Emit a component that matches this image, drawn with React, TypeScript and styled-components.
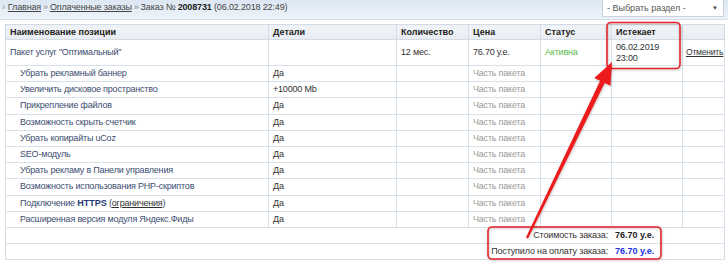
import { FC } from "react";
import styled, { createGlobalStyle } from "styled-components";

const GlobalStyle = createGlobalStyle`
  html, body {
    margin: 0;
    padding: 0;
    background: #ffffff;
  }
  body {
    font-family: Tahoma, "Liberation Sans", Arial, sans-serif;
    font-size: 9px;
    color: #333;
  }
`;

const Page = styled.div`
  position: relative;
  width: 728px;
  height: 264px;
  overflow: hidden;
`;

const TopBar = styled.div`
  height: 19px;
  display: flex;
  align-items: flex-start;
  justify-content: space-between;
  padding: 0 4px 0 2px;
  background: linear-gradient(#dce7f3, #edf3f9);
  border-bottom: 1px solid #d2deec;
`;

const Crumbs = styled.div`
  padding-top: 1px;
  line-height: 12px;
  color: #444;
  white-space: nowrap;
  letter-spacing: -0.15px;

  a {
    color: #444;
    text-decoration: underline;
  }
  b {
    color: #222;
  }
`;

const Sep = styled.span<{ $first?: boolean }>`
  color: #888;
  margin: ${(p) => (p.$first ? "0 3px 0 0" : "0 2px")};
`;

const Select = styled.div`
  width: 122px;
  height: 17px;
  box-sizing: border-box;
  background: #fff;
  border: 1px solid #c9d3de;
  border-top: none;
  display: flex;
  align-items: center;
  justify-content: space-between;
  padding: 0 5px 0 4px;
  color: #555;
`;

const Caret = styled.span`
  font-size: 6px;
  color: #444;
`;

const Table = styled.table`
  margin: 4px 0 0 5px;
  width: 719px;
  table-layout: fixed;
  border-collapse: collapse;
  border: 1px solid #d3dbe6;
`;

const Th = styled.th`
  height: 14px;
  padding: 0 4px;
  text-align: left;
  font-weight: bold;
  color: #222;
  background: linear-gradient(#f1f3f6, #e9edf2);
  border: 1px solid #d3dbe6;
  white-space: nowrap;
`;

type Tone = "name" | "sub" | "muted" | "green" | "plain";

const toneColor: Record<Tone, string> = {
  name: "#3c4d70",
  sub: "#3c4d70",
  muted: "#9a9a9a",
  green: "#5cbb4a",
  plain: "#333",
};

const Td = styled.td<{ $tall?: boolean; $tone?: Tone }>`
  height: ${(p) => (p.$tall ? "25px" : "15.2px")};
  padding: ${(p) => (p.$tone === "sub" ? "0 4px 0 14px" : "0 4px")};
  border: 1px solid #d8e0ea;
  line-height: 11px;
  letter-spacing: -0.2px;
  white-space: nowrap;
  overflow: hidden;
  color: ${(p) => toneColor[p.$tone ?? "plain"]};

  a {
    color: #333;
    text-decoration: underline;
  }
`;

const CancelCell = styled(Td)`
  padding: 0 2px 0 3px;
  font-size: 8.5px;
`;

const Https = styled.b`
  color: #1f3b78;
  letter-spacing: 0;
`;

const SumCell = styled.td`
  height: 15px;
  padding: 0;
  border-top: 1px solid #d8e0ea;
  border-bottom: 1px solid #d8e0ea;
`;

const SumLine = styled.div`
  display: grid;
  grid-template-columns: 602px 1fr;
  column-gap: 7px;
  align-items: center;
  line-height: 15px;
`;

const SumLabel = styled.span`
  text-align: right;
  color: #333;
  letter-spacing: -0.15px;
`;

const SumValue = styled.b<{ $paid?: boolean }>`
  color: ${(p) => (p.$paid ? "#2233dd" : "#222")};
`;

const Overlay = styled.svg`
  position: absolute;
  left: 0;
  top: 0;
  pointer-events: none;
`;

const subItems: { name: React.ReactNode; detail: string }[] = [
  { name: "Убрать рекламный баннер", detail: "Да" },
  { name: "Увеличить дисковое пространство", detail: "+10000 Mb" },
  { name: "Прикрепление файлов", detail: "Да" },
  { name: "Возможность скрыть счетчик", detail: "Да" },
  { name: "Убрать копирайты uCoz", detail: "Да" },
  { name: "SEO-модуль", detail: "Да" },
  { name: "Убрать рекламу в Панели управления", detail: "Да" },
  { name: "Возможность использования PHP-скриптов", detail: "Да" },
  {
    name: (
      <>
        Подключение <Https>HTTPS</Https> (<a href="#">ограничения</a>)
      </>
    ),
    detail: "Да",
  },
  { name: "Расширенная версия модуля Яндекс.Фиды", detail: "Да" },
];

const App: FC = () => {
  return (
    <Page>
      <GlobalStyle />
      <TopBar>
        <Crumbs>
          <Sep $first>›</Sep>
          <a href="#">Главная</a>
          <Sep>»</Sep>
          <a href="#">Оплаченные заказы</a>
          <Sep>»</Sep>
          Заказ № <b>2008731</b> (06.02.2018 22:49)
        </Crumbs>
        <Select>
          - Выбрать раздел -<Caret>▼</Caret>
        </Select>
      </TopBar>

      <Table>
        <colgroup>
          <col style={{ width: 263 }} />
          <col style={{ width: 128 }} />
          <col style={{ width: 72 }} />
          <col style={{ width: 72 }} />
          <col style={{ width: 71 }} />
          <col style={{ width: 71 }} />
          <col style={{ width: 42 }} />
        </colgroup>
        <thead>
          <tr>
            <Th>Наименование позиции</Th>
            <Th>Детали</Th>
            <Th>Количество</Th>
            <Th>Цена</Th>
            <Th>Статус</Th>
            <Th>Истекает</Th>
            <Th></Th>
          </tr>
        </thead>
        <tbody>
          <tr>
            <Td $tall $tone="name">Пакет услуг "Оптимальный"</Td>
            <Td $tall></Td>
            <Td $tall>12 мес.</Td>
            <Td $tall>76.70 у.е.</Td>
            <Td $tall $tone="green">Активна</Td>
            <Td $tall>
              06.02.2019
              <br />
              23:00
            </Td>
            <CancelCell $tall>
              <a href="#">Отменить</a>
            </CancelCell>
          </tr>
          {subItems.map((it, i) => (
            <tr key={i}>
              <Td $tone="sub">{it.name}</Td>
              <Td>{it.detail}</Td>
              <Td></Td>
              <Td $tone="muted">Часть пакета</Td>
              <Td></Td>
              <Td></Td>
              <Td></Td>
            </tr>
          ))}
          <tr>
            <SumCell colSpan={7}>
              <SumLine>
                <SumLabel>Стоимость заказа:</SumLabel>
                <SumValue>76.70 у.е.</SumValue>
              </SumLine>
            </SumCell>
          </tr>
          <tr>
            <SumCell colSpan={7}>
              <SumLine>
                <SumLabel>Поступило на оплату заказа:</SumLabel>
                <SumValue $paid>76.70 у.е.</SumValue>
              </SumLine>
            </SumCell>
          </tr>
        </tbody>
      </Table>

      <Overlay width="728" height="264" viewBox="0 0 728 264">
        <defs>
          <filter id="sh" x="-10%" y="-10%" width="120%" height="120%">
            <feDropShadow dx="0.5" dy="1" stdDeviation="1" floodColor="#000" floodOpacity="0.25" />
          </filter>
        </defs>
        <g filter="url(#sh)" fill="none" stroke="#e3252b" strokeWidth="1.6">
          <rect x="607" y="22.5" width="73" height="46" rx="4" />
          <rect x="488" y="227" width="173" height="32" rx="4" />
        </g>
        <polygon
          filter="url(#sh)"
          fill="#ec1c1f"
          points="526,237.6 600.1,80.7 594.3,77.9 612,62 610.5,85.7 604.7,82.9 528,238.4"
        />
      </Overlay>
    </Page>
  );
};

export default App;
